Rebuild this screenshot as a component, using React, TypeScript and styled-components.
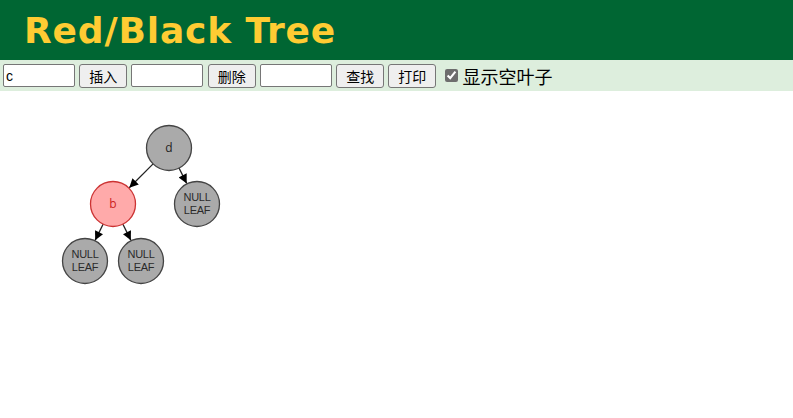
import React from "react";
import styled, { createGlobalStyle } from "styled-components";

const Global = createGlobalStyle`
  html, body { margin: 0; padding: 0; background: #fff; }
  body { font-family: "Liberation Sans", "Noto Sans CJK SC", sans-serif; }
`;

const Header = styled.header`
  height: 60px;
  background: #006633;
  display: flex;
  align-items: center;
  padding-left: 24px;
`;

const Title = styled.h1`
  margin: 0;
  font-family: "DejaVu Sans", Verdana, sans-serif;
  font-weight: bold;
  font-size: 36px;
  color: #ffcc33;
  letter-spacing: 0.85px;
`;

const Toolbar = styled.div`
  height: 31px;
  background: #ddeedd;
  display: flex;
  align-items: center;
  padding-left: 3px;
  gap: 4.45px;
`;

const Field = styled.input`
  box-sizing: border-box;
  width: 72px;
  height: 23px;
  margin: 0;
  padding: 1px 2px;
  border: 1px solid #767676;
  border-radius: 2px;
  background: #fff;
  font-family: "Liberation Sans", sans-serif;
  font-size: 14px;
  color: #000;
`;

const Btn = styled.button`
  box-sizing: border-box;
  width: 47.6px;
  height: 24px;
  margin: 0;
  padding: 0;
  border: 1px solid #767676;
  border-radius: 3px;
  background: #efefef;
  font-family: "Noto Sans CJK SC", sans-serif;
  font-size: 14px;
  color: #000;
`;

const CheckLabel = styled.label`
  display: flex;
  align-items: center;
  margin-left: 5px;
  font-family: "Noto Sans CJK SC", sans-serif;
  font-size: 18px;
  color: #000;
`;

const Check = styled.input`
  width: 13px;
  height: 13px;
  margin: 0 4px 0 0;
  accent-color: #6d6d6d;
`;

const Canvas = styled.div`
  height: 327px;
  background: #fff;
`;

type N = { x: number; y: number; label: string; red?: boolean; leaf?: boolean };

const nodes: N[] = [
  { x: 169, y: 57, label: "d" },
  { x: 113, y: 113, label: "b", red: true },
  { x: 197, y: 113, label: "", leaf: true },
  { x: 85, y: 170, label: "", leaf: true },
  { x: 141, y: 170, label: "", leaf: true },
];
const edges: [number, number][] = [
  [0, 1],
  [0, 2],
  [1, 3],
  [1, 4],
];
const R = 22.5;

function Tree() {
  return (
    <svg width="260" height="220" style={{ display: "block" }}>
      <defs>
        <marker
          id="arr"
          viewBox="0 0 10 10"
          refX="10"
          refY="5"
          markerUnits="userSpaceOnUse"
          markerWidth="10"
          markerHeight="9"
          orient="auto"
        >
          <path d="M0,0 L10,5 L0,10 z" fill="#000" />
        </marker>
      </defs>
      {edges.map(([a, b], i) => {
        const A = nodes[a];
        const B = nodes[b];
        const dx = B.x - A.x;
        const dy = B.y - A.y;
        const d = Math.hypot(dx, dy);
        const ux = dx / d;
        const uy = dy / d;
        return (
          <line
            key={i}
            x1={A.x + ux * R}
            y1={A.y + uy * R}
            x2={B.x - ux * (R + 0.5)}
            y2={B.y - uy * (R + 0.5)}
            stroke="#222"
            strokeWidth="1.3"
            markerEnd="url(#arr)"
          />
        );
      })}
      {nodes.map((n, i) => (
        <g key={i}>
          <circle
            cx={n.x}
            cy={n.y}
            r={R}
            fill={n.red ? "#ffaaaa" : "#aaaaaa"}
            stroke={n.red ? "#cc3333" : "#444"}
            strokeWidth="1.3"
          />
          {n.leaf ? (
            <text
              textAnchor="middle"
              fontFamily="'Liberation Sans', sans-serif"
              fontSize="11"
              fill="#2a2a2a"
              letterSpacing="-0.3"
            >
              <tspan x={n.x} y={n.y - 3}>NULL</tspan>
              <tspan x={n.x} y={n.y + 10}>LEAF</tspan>
            </text>
          ) : (
            <text
              x={n.x}
              y={n.y + 4}
              textAnchor="middle"
              fontFamily="'Open Sans', 'Liberation Sans', sans-serif"
              fontSize="12"
              fill={n.red ? "#cc2222" : "#222"}
            >
              {n.label}
            </text>
          )}
        </g>
      ))}
    </svg>
  );
}

export default function App() {
  return (
    <>
      <Global />
      <Header>
        <Title>Red/Black Tree</Title>
      </Header>
      <Toolbar>
        <Field defaultValue="c" />
        <Btn>插入</Btn>
        <Field />
        <Btn>删除</Btn>
        <Field />
        <Btn>查找</Btn>
        <Btn>打印</Btn>
        <CheckLabel>
          <Check type="checkbox" defaultChecked />
          显示空叶子
        </CheckLabel>
      </Toolbar>
      <Canvas>
        <Tree />
      </Canvas>
    </>
  );
}
